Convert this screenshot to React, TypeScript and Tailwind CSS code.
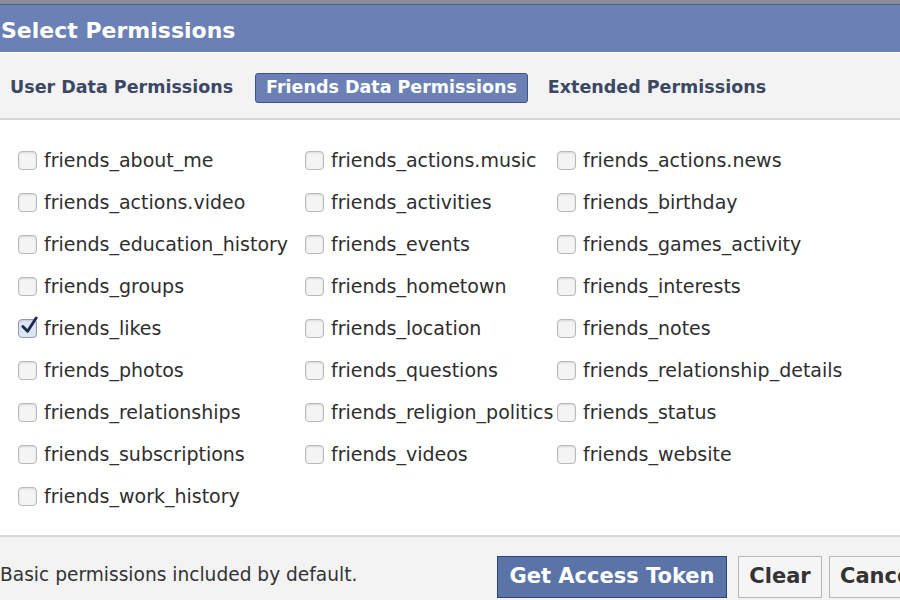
import React from "react";

const columns: string[][] = [
  [
    "friends_about_me",
    "friends_actions.video",
    "friends_education_history",
    "friends_groups",
    "friends_likes",
    "friends_photos",
    "friends_relationships",
    "friends_subscriptions",
    "friends_work_history",
  ],
  [
    "friends_actions.music",
    "friends_activities",
    "friends_events",
    "friends_hometown",
    "friends_location",
    "friends_questions",
    "friends_religion_politics",
    "friends_videos",
  ],
  [
    "friends_actions.news",
    "friends_birthday",
    "friends_games_activity",
    "friends_interests",
    "friends_notes",
    "friends_relationship_details",
    "friends_status",
    "friends_website",
  ],
];

const checked = ["friends_likes"];

function Checkbox({ on }: { on: boolean }) {
  return (
    <span
      className={`relative inline-block w-[19px] h-[19px] shrink-0 rounded-[4px] border ${
        on ? "border-[#8d9ab8] bg-[#dfe6f3]" : "border-[#b9b9b9] bg-[#f4f4f4]"
      } shadow-[inset_0_1px_2px_rgba(0,0,0,0.12)]`}
    >
      {on && (
        <svg viewBox="0 0 20 20" className="absolute left-[1px] -top-[4px] w-[19px] h-[19px]">
          <path d="M3 11 L8 16 L17 2" fill="none" stroke="#1b2a55" strokeWidth="3" strokeLinecap="round" strokeLinejoin="round" />
        </svg>
      )}
    </span>
  );
}

function PermissionItem({ name }: { name: string }) {
  return (
    <label className="flex items-center h-[42px] gap-[7px] whitespace-nowrap">
      <Checkbox on={checked.includes(name)} />
      <span className="text-[19px] text-[#2e2e2e]">{name}</span>
    </label>
  );
}

export default function App() {
  const colWidths = ["w-[287px]", "w-[252px]", "flex-1"];

  return (
    <div
      className="w-[900px] h-[600px] overflow-hidden bg-white flex flex-col"
      style={{ fontFamily: '"DejaVu Sans", "Lucida Grande", sans-serif' }}
    >
      <div className="h-[4px] bg-[#8b8c9c]" />
      <div className="h-[48px] bg-[#6b81b5] border-t border-[#4e5f8e] flex items-center pt-[4px]">
        <h1 className="text-white font-bold text-[22px] pl-[1px]">Select Permissions</h1>
      </div>

      <div className="h-[68px] bg-[#f3f3f3] border-t border-white border-b-2 border-b-[#d6d6d6] flex items-center pl-[10px] pt-[4px]">
        <span className="text-[17.5px] font-bold text-[#3c4863]">User Data Permissions</span>
        <span className="ml-[22px] h-[30px] flex items-center text-[17.5px] font-bold text-white bg-[#6b81b5] border border-[#3f5386] rounded-[3px] px-[10px]">
          Friends Data Permissions
        </span>
        <span className="ml-[20px] text-[17.5px] font-bold text-[#3c4863]">Extended Permissions</span>
      </div>

      <div className="flex-1 flex pl-[18px] pt-[19px]">
        {columns.map((col, i) => (
          <div key={i} className={`flex flex-col ${colWidths[i]}`}>
            {col.map((name) => (
              <PermissionItem key={name} name={name} />
            ))}
          </div>
        ))}
      </div>

      <div className="h-[65px] bg-[#f3f3f3] border-t-2 border-[#d6d6d6] flex items-center">
        <span className="w-[497px] shrink-0 text-[18.6px] text-[#333] mt-[12px] whitespace-nowrap">
          Basic permissions included by default.
        </span>
        <div className="flex items-center gap-[10px] mt-[16px] shrink-0">
          <button className="h-[42px] w-[230px] bg-[#5b74a8] border border-[#29447e] text-white font-bold text-[21px]">
            Get Access Token
          </button>
          <button className="h-[42px] w-[84px] bg-[#f5f5f5] border border-[#b8b8b8] text-[#333] font-bold text-[21px] ml-[1px]">
            Clear
          </button>
          <button className="h-[42px] w-[100px] bg-[#f5f5f5] border border-[#b8b8b8] text-[#333] font-bold text-[21px] text-left pl-[10px] -ml-[3px]">
            Cancel
          </button>
        </div>
      </div>
    </div>
  );
}
